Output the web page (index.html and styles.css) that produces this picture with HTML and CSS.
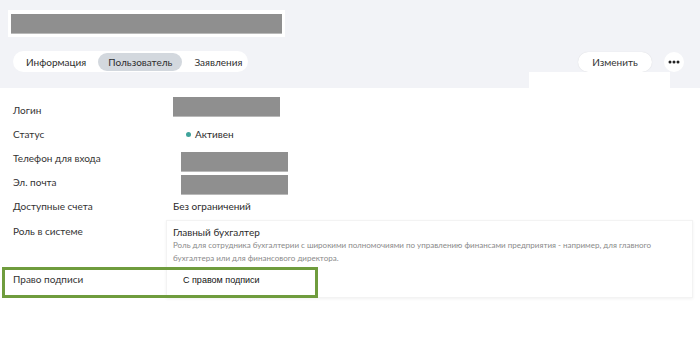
FILE: index.html
```html
<!DOCTYPE html>
<html lang="ru">
<head>
<meta charset="utf-8">
<link rel="stylesheet" href="styles.css">
</head>
<body>
<header class="top">
  <div class="title-box"><div class="redact title-redact"></div></div>
  <div class="toolbar">
    <nav class="tabs">
      <span class="tab">Информация</span>
      <span class="tab active">Пользователь</span>
      <span class="tab">Заявления</span>
    </nav>
    <div class="actions">
      <button class="btn">Изменить</button>
      <button class="btn-round" aria-label="Ещё">
        <svg width="12" height="4" viewBox="0 0 12 4"><circle cx="2" cy="2" r="1.5" fill="#222"/><circle cx="6" cy="2" r="1.5" fill="#222"/><circle cx="10" cy="2" r="1.5" fill="#222"/></svg>
      </button>
    </div>
  </div>
  <div class="menu-patch"></div>
</header>
<main class="content">
  <div class="grid">
    <div class="label">Логин</div>
    <div class="value"><div class="redact r-login"></div></div>

    <div class="label">Статус</div>
    <div class="value status"><span class="dot"></span>Активен</div>

    <div class="label">Телефон для входа</div>
    <div class="value"><div class="redact r-phone"></div></div>

    <div class="label">Эл. почта</div>
    <div class="value"><div class="redact r-mail"></div></div>

    <div class="label">Доступные счета</div>
    <div class="value">Без ограничений</div>

    <div class="label role-label">Роль в системе</div>
    <div class="card">
      <div class="role">
        <div class="role-title">Главный бухгалтер</div>
        <div class="role-desc">Роль для сотрудника бухгалтерии с широкими полномочиями по управлению финансами предприятия - например, для главного бухгалтера или для финансового директора.</div>
      </div>
      <div class="sign-value">С правом подписи</div>
    </div>
    <div class="label sign-label">Право подписи</div>
  </div>
  <div class="highlight"></div>
</main>
</body>
</html>
```
FILE: styles.css
```css
* { box-sizing: border-box; }
html, body { margin: 0; padding: 0; }
body {
  font-family: "Lato", "Noto Sans", sans-serif;
  font-size: 10px;
  color: #2b2b2b;
  background: #fff;
  width: 700px;
  height: 359px;
  overflow: hidden;
}
.top {
  position: relative;
  background: #f2f3f7;
  height: 88px;
  padding: 10px 0 0 8px;
}
.title-box {
  width: 277px;
  height: 27px;
  background: #fff;
  padding: 4px 3px;
}
.redact {
  background: #8f8f8f;
  border-bottom: 1px solid #b9b9b9;
}
.title-redact { height: 20px; }
.toolbar {
  display: flex;
  justify-content: space-between;
  align-items: center;
  margin-top: 14px;
  padding-left: 5px;
  padding-right: 16px;
}
.tabs {
  display: flex;
  align-items: center;
  background: #fff;
  border-radius: 11px;
  height: 21px;
  padding: 0 3px;
  width: 235px;
}
.tab {
  height: 18px;
  line-height: 18px;
  padding: 0 10px;
  border-radius: 9px;
  color: #2e2e2e;
}
.active { background: #d3d8de; margin: 0 2px; }
.actions { display: flex; align-items: center; gap: 12px; }
.btn {
  font: inherit;
  color: #333;
  background: #fff;
  border: none;
  height: 20px;
  width: 74px;
  border-radius: 10px;
  box-shadow: 0 0 1px rgba(0,0,0,.15);
  padding: 0;
}
.btn-round {
  width: 20px;
  height: 20px;
  border-radius: 50%;
  border: none;
  background: #fff;
  padding: 0;
  display: flex;
  align-items: center;
  justify-content: center;
}
.menu-patch {
  position: absolute;
  left: 529px;
  top: 72px;
  width: 141px;
  height: 16px;
  background: #fff;
}
.content {
  position: relative;
  padding-top: 10px;
}
.grid {
  display: grid;
  grid-template-columns: 160px 1fr;
  grid-auto-rows: 24px;
}
.label {
  padding-left: 13px;
  line-height: 24px;
  color: #333;
}
.value {
  padding-left: 13px;
  line-height: 24px;
}
.r-login { width: 107px; height: 20px; margin-top: -1px; }
.r-phone { width: 107px; height: 20px; margin: 6px 0 0 8px; }
.r-mail { width: 107px; height: 20px; margin: 5px 0 0 8px; }
.status { display: flex; align-items: center; }
.dot {
  width: 5px; height: 5px; border-radius: 50%;
  background: #3fa39b;
  margin: 0 4px 0 13px;
}
.role-label { grid-row: 6; grid-column: 1; padding-top: 1px; }
.sign-label { grid-row: 8; grid-column: 1; line-height: 24px; padding-top: 1px; }
.card {
  grid-row: 6 / span 3;
  grid-column: 2;
  margin: 2px 7px 0 6px;
  height: 78px;
  border: 1px solid #f3f3f3;
  box-shadow: 0 1px 3px rgba(0,0,0,.06);
  padding: 4px 0 0 6px;
}
.role-title { color: #2b2b2b; line-height: 14px; }
.role-desc {
  font-size: 8px;
  line-height: 13px;
  color: #8a8a8a;
  width: 510px;
}
.sign-value {
  font-family: "Liberation Sans", Arial, sans-serif;
  font-size: 9px;
  color: #111;
  margin: 10px 0 0 10px;
}
.highlight {
  position: absolute;
  left: 2px;
  top: 179px;
  width: 316px;
  height: 31px;
  border: 3px solid #6f9c3d;
}
```
